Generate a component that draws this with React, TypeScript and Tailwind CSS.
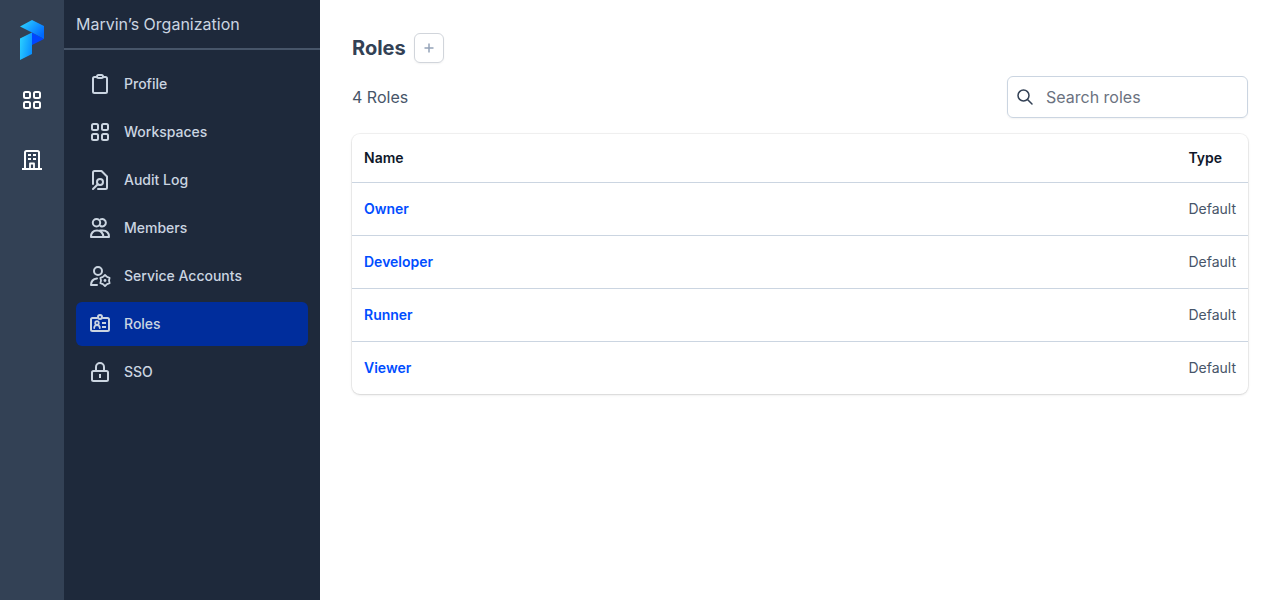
import React, { useState } from 'react';

interface IconProps {
  className?: string;
  children: React.ReactNode;
}

const Icon: React.FC<IconProps> = ({ className = 'size-6', children }) => (
  <svg
    className={className}
    viewBox="0 0 24 24"
    fill="none"
    stroke="currentColor"
    strokeWidth={2}
    strokeLinecap="round"
    strokeLinejoin="round"
    aria-hidden="true"
  >
    {children}
  </svg>
);

const ClipboardIcon = () => (
  <Icon>
    <path d="M8.5 5H6.5A1.5 1.5 0 0 0 5 6.5V19.5A1.5 1.5 0 0 0 6.5 21H17.5A1.5 1.5 0 0 0 19 19.5V6.5A1.5 1.5 0 0 0 17.5 5H15.5" />
    <rect x="9" y="3" width="6" height="3" rx="1.5" />
  </Icon>
);

const GridIcon = () => (
  <Icon>
    <rect x="4" y="4" width="6" height="6" rx="1.5" />
    <rect x="14" y="4" width="6" height="6" rx="1.5" />
    <rect x="4" y="14" width="6" height="6" rx="1.5" />
    <rect x="14" y="14" width="6" height="6" rx="1.5" />
  </Icon>
);

const AuditIcon = () => (
  <Icon>
    <path d="M5 16V4.5A1.5 1.5 0 0 1 6.5 3H13.5L19 8.5V19.5A1.5 1.5 0 0 1 17.5 21H10" />
    <circle cx="12" cy="14" r="3" />
    <path d="M9.8 16.2L5 21" />
  </Icon>
);

const MembersIcon = () => (
  <Icon>
    <circle cx="8.5" cy="6.7" r="3.7" />
    <path d="M12.5 3.4A3.7 3.7 0 1 1 12.5 10" />
    <path d="M3 21C3 16.8 5.2 14.5 9 14.5S15 16.8 15.5 21Z" />
    <path d="M12 14.5H14.5C18.5 14.5 21 17 21 21H15.5" />
  </Icon>
);

const ServiceIcon = () => (
  <Icon>
    <circle cx="10" cy="7" r="4" />
    <path d="M9 14.5C5.5 15 3 17.5 3 21H9" />
    <path
      strokeWidth={1.8}
      d="M17 11L19.1 12.9L21.6 13.8L21 16.5L21.6 19.2L19.1 20.1L17 22L14.9 20.1L12.4 19.2L13 16.5L12.4 13.8L14.9 12.9Z"
    />
    <circle cx="17" cy="16.5" r="1.4" fill="currentColor" stroke="none" />
  </Icon>
);

const BadgeIcon = () => (
  <Icon>
    <path d="M9 6H4.5A1.5 1.5 0 0 0 3 7.5V17.5A1.5 1.5 0 0 0 4.5 19H19.5A1.5 1.5 0 0 0 21 17.5V7.5A1.5 1.5 0 0 0 19.5 6H15" />
    <circle cx="12" cy="5" r="2" />
    <circle cx="9" cy="11" r="1.8" strokeWidth={1.8} />
    <path strokeWidth={1.8} d="M6.2 16C6.2 14.2 7.2 13.2 9 13.2S11.8 14.2 11.8 16" />
    <path strokeLinecap="butt" d="M14 11H18M14 15H18" />
  </Icon>
);

const LockIcon = () => (
  <Icon>
    <rect x="4" y="11" width="16" height="10" rx="1.5" />
    <path d="M8 11V7A4 4 0 0 1 16 7V11" />
    <path strokeLinecap="butt" d="M12 14V18" />
  </Icon>
);

const BuildingIcon = () => (
  <Icon>
    <path d="M5 21V4.5A1.5 1.5 0 0 1 6.5 3H17.5A1.5 1.5 0 0 1 19 4.5V21" />
    <path strokeLinecap="butt" d="M2 21H22" />
    <path strokeLinecap="butt" strokeWidth={1.8} d="M10 21V15.5H14V21" />
    <path strokeLinecap="butt" d="M8 7H11M13 7H16M8 11H11M13 11H16" />
  </Icon>
);

const Logo = () => (
  <svg className="h-10 w-6" viewBox="0 0 24 40" aria-hidden="true">
    <defs>
      <linearGradient id="logo-top" x1="0" y1="0" x2="1" y2="0.7">
        <stop offset="0.1" stopColor="#2bd0ff" />
        <stop offset="1" stopColor="#0068ff" />
      </linearGradient>
      <linearGradient id="logo-stem" x1="0" y1="0.2" x2="1" y2="0.6">
        <stop offset="0" stopColor="#2bd0ff" />
        <stop offset="1" stopColor="#0a90ff" />
      </linearGradient>
    </defs>
    <path d="M12 12.5L24 19L12 25Z" fill="#0046ff" />
    <path d="M0 6.5L12 0L24 6V19L12 12.5Z" fill="url(#logo-top)" />
    <path d="M0 18.5L12 12.5V34L0 40Z" fill="url(#logo-stem)" />
  </svg>
);

const navItems = [
  { label: 'Profile', icon: ClipboardIcon },
  { label: 'Workspaces', icon: GridIcon },
  { label: 'Audit Log', icon: AuditIcon },
  { label: 'Members', icon: MembersIcon },
  { label: 'Service Accounts', icon: ServiceIcon },
  { label: 'Roles', icon: BadgeIcon },
  { label: 'SSO', icon: LockIcon },
];

const roles = [
  { name: 'Owner', type: 'Default' },
  { name: 'Developer', type: 'Default' },
  { name: 'Runner', type: 'Default' },
  { name: 'Viewer', type: 'Default' },
];

const Rail = () => (
  <nav aria-label="Main" className="flex w-16 shrink-0 flex-col items-center bg-[#334155] pt-5 text-white">
    <a href="#home" aria-label="Home">
      <Logo />
    </a>
    <a href="#workspaces" aria-label="Workspaces" className="mt-7">
      <GridIcon />
    </a>
    <a href="#organization" aria-label="Organization" className="mt-9">
      <BuildingIcon />
    </a>
  </nav>
);

const Sidebar = () => (
  <aside className="w-64 shrink-0 bg-[#1e293b] text-[#cbd5e1]">
    <div className="flex h-[50px] items-center border-b-2 border-[#475569] px-3">Marvin’s Organization</div>
    <nav aria-label="Organization" className="flex flex-col gap-1 p-3">
      {navItems.map(({ label, icon: ItemIcon }) => (
        <a
          key={label}
          href="#"
          aria-current={label === 'Roles' ? 'page' : undefined}
          className={`flex h-11 items-center gap-3 rounded-md px-3 text-sm font-medium ${label === 'Roles' ? 'bg-[#002d9c]' : ''}`}
        >
          <ItemIcon />
          {label}
        </a>
      ))}
    </nav>
  </aside>
);

export default function App() {
  const [search, setSearch] = useState('');
  const visible = roles.filter((role) => role.name.toLowerCase().includes(search.toLowerCase()));

  return (
    <div className="flex min-h-screen bg-white font-['Inter',sans-serif]">
      <Rail />
      <Sidebar />
      <main className="min-w-0 flex-1 px-8 py-[33px]">
        <div className="flex items-center gap-2">
          <h1 className="text-xl font-bold text-[#334155]">Roles</h1>
          <button
            type="button"
            aria-label="Add role"
            className="flex size-[30px] items-center justify-center rounded-md border border-[#d1d5db] text-[#94a3b8] shadow-xs"
          >
            <svg className="size-4" viewBox="0 0 16 16" stroke="currentColor" strokeWidth={1.5} aria-hidden="true">
              <path d="M8 3.5V12.5M3.5 8H12.5" />
            </svg>
          </button>
        </div>

        <div className="mt-[13px] flex items-center justify-between">
          <p className="text-[#475569]">{visible.length} Roles</p>
          <label className="flex h-[42px] w-[241px] items-center gap-3 rounded-md border border-[#cbd5e1] px-2 shadow-xs">
            <svg
              className="size-[18px] shrink-0 text-[#334155]"
              viewBox="0 0 18 18"
              fill="none"
              stroke="currentColor"
              strokeWidth={1.5}
              strokeLinecap="round"
              aria-hidden="true"
            >
              <circle cx="7.5" cy="7.5" r="5.5" />
              <path d="M11.5 11.5L16 16" />
            </svg>
            <input
              type="text"
              aria-label="Search roles"
              placeholder="Search roles"
              value={search}
              onChange={(e) => setSearch(e.target.value)}
              className="min-w-0 flex-1 text-[#334155] outline-none placeholder:text-[#6b7280]"
            />
          </label>
        </div>

        <div className="mt-4 overflow-hidden rounded-lg shadow-sm ring-1 ring-black/5">
          <table className="w-full text-left text-sm">
            <thead>
              <tr className="h-12 border-b border-[#cbd5e1] text-[#0f172a]">
                <th className="px-3 font-semibold">Name</th>
                <th className="w-px px-3 font-semibold">Type</th>
              </tr>
            </thead>
            <tbody className="divide-y divide-[#cbd5e1]">
              {visible.map((role) => (
                <tr key={role.name} className="h-[53px]">
                  <td className="px-3">
                    <a href="#" className="font-semibold text-[#004dff]">
                      {role.name}
                    </a>
                  </td>
                  <td className="px-3 text-[#475569]">{role.type}</td>
                </tr>
              ))}
            </tbody>
          </table>
        </div>
      </main>
    </div>
  );
}
